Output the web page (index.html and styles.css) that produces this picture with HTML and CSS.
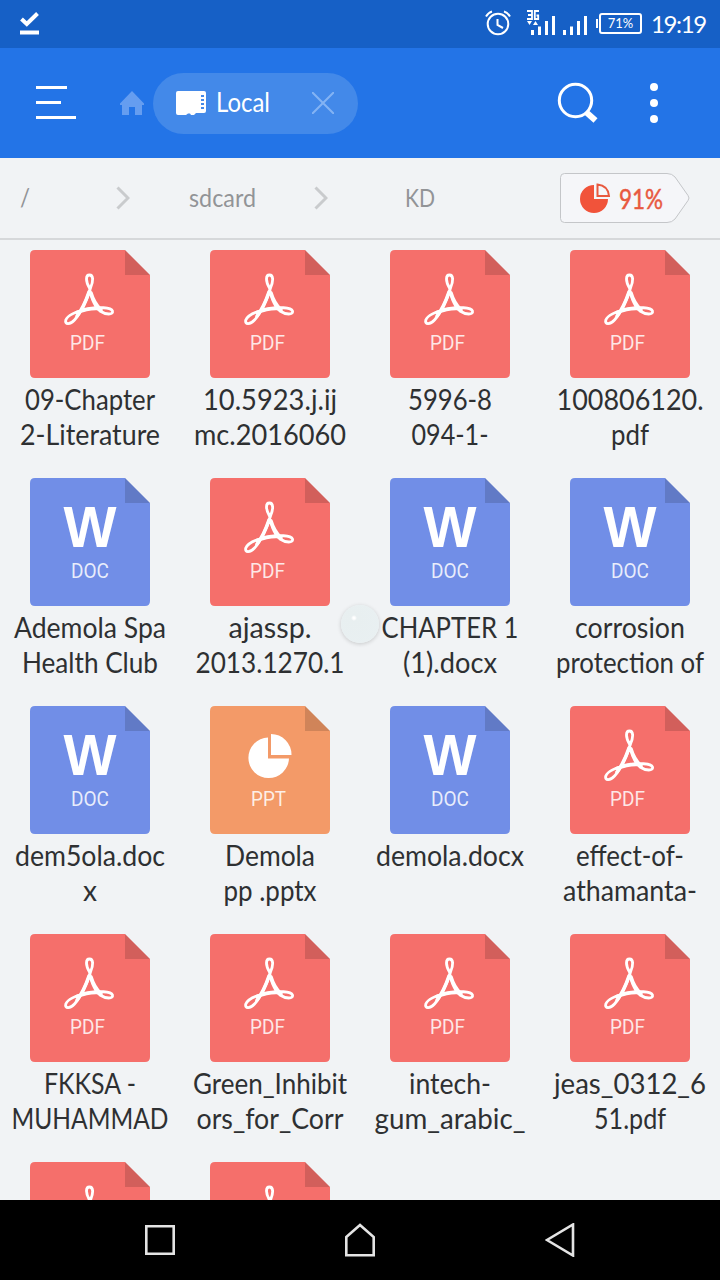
FILE: index.html
```
<!DOCTYPE html>
<html lang="en">
<head>
  <meta charset="UTF-8">
  <meta name="viewport" content="width=device-width, initial-scale=1.0">
  <title>File Manager</title>
  <link rel="stylesheet" href="styles.css">
</head>
<body>
  <!-- file type icons -->
  <svg class="sprites" width="0" height="0">
    <symbol id="sheet" viewBox="0 0 120 128">
      <path fill="currentColor" d="M4 0H95L120 25V123Q120 128 115 128H5Q0 128 0 123V5Q0 0 5 0Z"/>
      <path fill="#000" opacity=".14" d="M95 0L120 25H95Z"/>
    </symbol>
    <symbol id="pdf" viewBox="0 0 120 128">
      <use href="#sheet"/>
      <g fill="none" stroke="#fff" stroke-linecap="round" stroke-linejoin="round">
        <path stroke-width="2.8" d="M59.500 38C55.500 31 55.500 25 59.500 25C63.500 25 63.500 31 60.500 38C57 50 50 64 44.500 70C40 75 34.500 74.500 35.800 70C38 64.500 48 61 58 59C68 57 81 57 82.500 61C83.500 65 76 65 70 61C64 56 60 44 59.500 38"/>
        <path stroke-width="3.6" d="M59 42C56 51 51 61 47 66M61 43C63 50 67 56 71 60M47 62.500C54 59.500 62 58 69 58.500"/>
      </g>
    </symbol>
    <symbol id="doc" viewBox="0 0 120 128">
      <use href="#sheet"/>
    </symbol>
    <symbol id="ppt" viewBox="0 0 120 128">
      <use href="#sheet"/>
      <path fill="#fff" d="M58 31.500V52.500H79A20.300 20.300 0 1 1 58 31.500ZM61 28A20.500 20.500 0 0 1 81.500 49H61Z"/>
    </symbol>
  </svg>

  <div class="screen">
    <header class="status-bar">
      <svg class="download-icon" width="20" height="24" viewBox="0 0 20 24">
        <path fill="none" stroke="#fff" stroke-width="4" d="M1.500 8L6.800 13L17.500 2.500"/>
        <path fill="#fff" d="M0 19.500H19V23.500H0Z"/>
      </svg>
      <div class="status-right">
        <svg width="26" height="26" viewBox="0 0 26 26" fill="none" stroke="#fff" stroke-width="2">
          <circle cx="13" cy="14" r="10.300"/>
          <path d="M12.500 9V15L18 18M1 6.500Q3.500 2.500 7 1.500M25 6.500Q22.500 2.500 19 1.500"/>
        </svg>
        <svg class="signal" width="62" height="28" viewBox="0 0 62 28" fill="#fff">
          <path fill="none" stroke="#fff" stroke-width="1.800" d="M0 2H5V10H0M1 6H5M12 2H7.800V10H11.200V6.500H9.500"/>
          <path d="M0 12H5L2.500 16ZM6 16H11L8.500 12ZM4 21H7V26H4ZM11 17.500H14V26H11ZM18 12H21V26H18ZM25 7H28V26H25ZM36 21H39V26H36ZM43 17.500H46V26H43ZM50 12H53V26H50ZM57 7H60V26H57Z"/>
        </svg>
        <div class="battery">71%</div>
        <div class="clock">19:19</div>
      </div>
    </header>

    <nav class="toolbar">
      <svg class="menu-icon" width="40" height="34" viewBox="0 0 40 34" fill="#fff">
        <path d="M0 0H31V3H0ZM0 15H25V18H0ZM0 30H40V33H0Z"/>
      </svg>
      <svg class="home-icon" width="24" height="24" viewBox="0 0 24 24">
        <path fill="#659df0" d="M12 0L24 12.500V14H22V24H15V16H9V24H2V14H0V12.500Z"/>
      </svg>
      <div class="tab">
        <svg width="30" height="24" viewBox="0 0 30 24">
          <path fill="#fff" d="M2 0H28Q30 0 30 2V20Q30 22 28 22H20L18 24H15L14 22.500H12L10 24H2Q0 24 0 22V2Q0 0 2 0Z"/>
          <path fill="none" stroke="#4389e9" stroke-width="2" d="M25 5H28M25 9H28M25 13H28M25 17H28"/>
        </svg>
        <svg class="tab-name" width="55" height="34"><text x="0" y="26" textLength="54" lengthAdjust="spacingAndGlyphs">Local</text></svg>
        <svg class="tab-close" width="22" height="22" viewBox="0 0 22 22">
          <path stroke="#83b3f4" stroke-width="2" d="M0 0L22 22M22 0L0 22"/>
        </svg>
      </div>
      <svg class="search-icon" width="42" height="42" viewBox="0 0 42 42" fill="none" stroke="#fff">
        <circle cx="18.500" cy="18.500" r="16.200" stroke-width="3"/>
        <path stroke-width="6" d="M29 30L38.500 38.500"/>
      </svg>
      <svg class="more-icon" width="8" height="42" viewBox="0 0 8 42" fill="#fff">
        <circle cx="4" cy="5" r="4"/><circle cx="4" cy="21" r="4"/><circle cx="4" cy="37" r="4"/>
      </svg>
    </nav>

    <div class="path-bar">
      <svg class="crumb root" width="12" height="34"><text x="0" y="26" textLength="10" lengthAdjust="spacingAndGlyphs">/</text></svg>
      <svg class="arrow" width="14" height="24" viewBox="0 0 14 24"><path d="M1.500 1.500L12 12L1.500 22.500"/></svg>
      <svg class="crumb sdcard" width="70" height="34"><text x="1" y="26" textLength="67" lengthAdjust="spacingAndGlyphs">sdcard</text></svg>
      <svg class="arrow" width="14" height="24" viewBox="0 0 14 24"><path d="M1.500 1.500L12 12L1.500 22.500"/></svg>
      <svg class="crumb kd" width="32" height="34"><text x="1" y="26" textLength="30" lengthAdjust="spacingAndGlyphs">KD</text></svg>
      <svg class="usage" width="130" height="51" viewBox="0 0 130 51">
        <path fill="#f5f6f9" stroke="#c4c6c9" d="M4.500 .5H107Q112 .5 115 4L128 22.500Q130 25 128 27.500L115 46Q112 49.500 107 49.500H4.500Q.5 49.500 .5 45.500V4.500Q.5 .5 4.500 .5Z"/>
        <path fill="#f1533a" d="M34 12V26H48A14 14 0 1 1 34 12Z"/>
        <path fill="none" stroke="#e8593f" stroke-width="2" d="M37.500 11.500V23H49Q48 12.500 37.500 11.500Z"/>
        <text x="59" y="36" textLength="44" lengthAdjust="spacingAndGlyphs">91%</text>
      </svg>
    </div>

    <main class="files" id="files"></main>

    <footer class="nav-bar">
      <svg width="30" height="30" viewBox="0 0 30 30"><path d="M1.300 1.300H28.700V28.700H1.300Z"/></svg>
      <svg width="30" height="34" viewBox="0 0 30 34"><path d="M1.300 14L15 2L28.700 14V32.200H1.300Z"/></svg>
      <svg width="30" height="34" viewBox="0 0 30 34"><path d="M28 1.500V32.500L2 17Z"/></svg>
    </footer>

    <div class="touch-ball"></div>
  </div>

  <script>
    // type, then each caption line with its width
    const files = [
      ['pdf', ['09-Chapter', 130], ['2-Literature', 140]],
      ['pdf', ['10.5923.j.ij', 134], ['mc.2016060', 152]],
      ['pdf', ['5996-8', 84], ['094-1-', 77]],
      ['pdf', ['100806120.', 147], ['pdf', 38]],
      ['doc', ['Ademola Spa', 152], ['Health Club', 136]],
      ['pdf', ['ajassp.', 83], ['2013.1270.1', 149]],
      ['doc', ['CHAPTER 1', 137], ['(1).docx', 94]],
      ['doc', ['corrosion', 110], ['protection of', 148]],
      ['doc', ['dem5ola.doc', 150], ['x', 14]],
      ['ppt', ['Demola', 90], ['pp .pptx', 93]],
      ['doc', ['demola.docx', 148]],
      ['pdf', ['effect-of-', 108], ['athamanta-', 134]],
      ['pdf', ['FKKSA -', 92], ['MUHAMMAD', 157]],
      ['pdf', ['Green_Inhibit', 154], ['ors_for_Corr', 147]],
      ['pdf', ['intech-', 82], ['gum_arabic_', 151]],
      ['pdf', ['jeas_0312_6', 152], ['51.pdf', 72]],
      ['pdf'],
      ['pdf']
    ];

    // lettering on the sheet, the last row only shows its top edge
    const letters = {
      pdf: '<text class="ext" x="40" y="100" textLength="35" lengthAdjust="spacingAndGlyphs">PDF</text>',
      doc: '<text class="big-w" x="33.5" y="69" textLength="53" lengthAdjust="spacingAndGlyphs">W</text>' +
           '<text class="ext" x="41" y="100" textLength="38" lengthAdjust="spacingAndGlyphs">DOC</text>',
      ppt: '<text class="ext" x="41" y="100" textLength="35" lengthAdjust="spacingAndGlyphs">PPT</text>'
    };

    document.getElementById('files').innerHTML = files.map(([type, ...lines]) => `
      <div class="file">
        <svg class="icon ${type}" width="120" height="128">
          <use href="#${type}"/>${lines.length ? letters[type] : ''}
        </svg>
        <svg class="name" width="180" height="84">
          ${lines.map(([text, width], i) =>
            `<text x="${90 - width / 2}" y="${32 + i * 35}" textLength="${width}" lengthAdjust="spacingAndGlyphs">${text}</text>`
          ).join('')}
        </svg>
      </div>`).join('');
  </script>
</body>
</html>
```
FILE: styles.css
```
* {
  box-sizing: border-box;
}

body {
  margin: 0;
  font-family: Lato, "Open Sans", sans-serif;
  background: #f1f3f5;
}

svg {
  display: block;
  flex: none;
}

.sprites {
  position: absolute;
}

.screen {
  position: relative;
  display: flex;
  flex-direction: column;
  width: 720px;
  height: 1280px;
  overflow: hidden;
}

/* status bar */
.status-bar {
  display: flex;
  justify-content: space-between;
  align-items: center;
  height: 48px;
  padding: 0 15px 2px 20px;
  background: #1660c6;
  color: #fff;
}

.status-right {
  display: flex;
  align-items: center;
}

.signal {
  margin: 0 7px 0 16px;
}

.battery {
  position: relative;
  width: 43px;
  height: 21px;
  margin: 0 9px 0 3px;
  border: 2px solid #fff;
  border-radius: 3px;
  font-size: 13px;
  line-height: 17px;
  text-align: center;
}

.battery::before {
  content: "";
  position: absolute;
  left: -5px;
  top: 4px;
  width: 2px;
  height: 9px;
  background: #fff;
}

.clock {
  width: 54px;
  font-size: 24px;
  letter-spacing: -1.4px;
  line-height: 30px;
  padding-top: 2px;
  white-space: nowrap;
}

/* toolbar */
.toolbar {
  display: flex;
  align-items: center;
  height: 110px;
  padding: 0 62px 0 36px;
  background: #2374e7;
}

.home-icon {
  margin-left: 44px;
}

.tab {
  display: flex;
  align-items: center;
  width: 205px;
  height: 61px;
  margin-left: 9px;
  padding: 0 24px 0 23px;
  border-radius: 31px;
  background: #4389e9;
}

.tab-name {
  margin-left: 10px;
  fill: #fff;
  font-size: 26px;
}

.tab-close {
  margin-left: auto;
}

.search-icon {
  margin-left: auto;
}

.more-icon {
  margin-left: 51px;
}

/* breadcrumbs */
.path-bar {
  display: flex;
  align-items: center;
  height: 82px;
  padding: 0 30px 0 20px;
  border-bottom: 2px solid #d6d8da;
}

.crumb {
  fill: #929497;
  font-size: 25px;
}

.arrow {
  fill: none;
  stroke: #c9cbcd;
  stroke-width: 3;
}

.root {
  margin-right: 84px;
}

.sdcard {
  margin: 0 56px 0 58px;
}

.kd {
  margin-left: 76px;
}

.usage {
  margin-left: auto;
}

.usage text {
  fill: #e8593f;
  stroke: #e8593f;
  stroke-width: .5;
  font-size: 27px;
}

/* file grid */
.files {
  flex: 1;
  display: grid;
  grid-template-columns: repeat(4, 180px);
  grid-auto-rows: 228px;
  min-height: 0;
  padding-top: 10px;
  overflow: hidden;
}

.file {
  display: flex;
  flex-direction: column;
  align-items: center;
}

.pdf {
  color: #f56f6b;
}

.doc {
  color: #718ee7;
}

.ppt {
  color: #f39a68;
}

.ext {
  fill: #fff;
  fill-opacity: .85;
  font-family: Roboto, sans-serif;
  font-size: 20px;
}

.big-w {
  fill: #fff;
  font-family: "Liberation Sans", sans-serif;
  font-size: 58px;
  font-weight: bold;
}

.name {
  fill: #2e3032;
  font-size: 29px;
}

/* bottom navigation */
.nav-bar {
  display: flex;
  justify-content: center;
  align-items: center;
  gap: 170px;
  height: 80px;
  background: #000;
}

.nav-bar path {
  fill: none;
  stroke: #e4e4e4;
  stroke-width: 2.6;
}

/* floating button over the list */
.touch-ball {
  position: absolute;
  left: 341px;
  top: 605px;
  width: 38px;
  height: 38px;
  border-radius: 50%;
  background: radial-gradient(circle at 13px 13px, #fff 0 1px, #e8eff0 3px, #e9f0f2 100%);
  box-shadow: 0 1px 4px rgba(0, 0, 0, .18);
}
```
